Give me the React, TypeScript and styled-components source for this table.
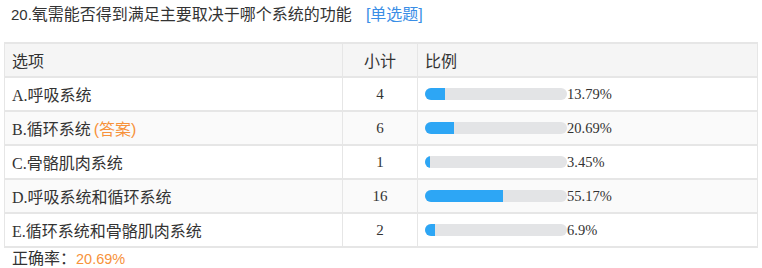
import React from "react";
import styled, { createGlobalStyle } from "styled-components";

const Global = createGlobalStyle`
  html, body { margin: 0; padding: 0; background: #fff; }
  body { font-family: "Liberation Sans", "Noto Sans CJK SC", sans-serif; color: #333; }
`;

const Page = styled.div`
  padding: 0 5px 0 4px;
  width: 762px;
  box-sizing: border-box;
`;

const Title = styled.div`
  font-size: 16px;
  line-height: 22px;
  padding: 4px 0 0 7px;
  height: 42px;
  box-sizing: border-box;
  color: #333;
`;

const Num = styled.span`
  font-size: 15px;
`;

const Tag = styled.span`
  color: #3a8ee6;
  margin-left: 14px;
`;

const Table = styled.table`
  width: 753px;
  border-collapse: collapse;
  table-layout: fixed;
  font-size: 16px;
`;

const HeadRow = styled.tr`
  background: #f5f5f5;
`;

const Row = styled.tr<{ $alt: boolean }>`
  background: ${(p) => (p.$alt ? "#fafafa" : "#fff")};
`;

const Cell = styled.td<{ $center?: boolean; $head?: boolean }>`
  border: 1px solid #e6e6e6;
  border-width: 2px 1px;
  height: 32px;
  padding: 0 7px;
  text-align: ${(p) => (p.$center ? "center" : "left")};
  font-family: ${(p) =>
    p.$head
      ? '"Liberation Sans", "Noto Sans CJK SC", sans-serif'
      : '"Liberation Serif", "Noto Sans CJK SC", serif'};
  font-weight: 400;
  color: #333;
  white-space: nowrap;
  vertical-align: middle;
`;

const Count = styled.span`
  font-size: 15px;
`;

const Answer = styled.span`
  color: #f7923b;
  font-family: "Liberation Sans", "Noto Sans CJK SC", sans-serif;
  margin-left: 3px;
`;

const BarWrap = styled.div`
  display: flex;
  align-items: center;
`;

const Track = styled.div`
  width: 142px;
  height: 12px;
  border-radius: 6px;
  background: #e3e4e6;
  overflow: hidden;
`;

const Fill = styled.div`
  height: 100%;
  background: #2da6f5;
`;

const Pct = styled.span`
  color: #333;
  font-size: 14.5px;
`;

const Footer = styled.div`
  font-size: 16px;
  line-height: 20px;
  padding: 1px 0 0 8px;
`;

const Rate = styled.span`
  color: #f7923b;
  font-size: 14.5px;
`;

const rows = [
  { label: "A.呼吸系统", n: 4, p: 13.79, pct: "13.79%" },
  { label: "B.循环系统", n: 6, p: 20.69, pct: "20.69%", answer: true },
  { label: "C.骨骼肌肉系统", n: 1, p: 3.45, pct: "3.45%" },
  { label: "D.呼吸系统和循环系统", n: 16, p: 55.17, pct: "55.17%" },
  { label: "E.循环系统和骨骼肌肉系统", n: 2, p: 6.9, pct: "6.9%" },
];

export default function App() {
  return (
    <Page>
      <Global />
      <Title>
        <Num>20.</Num>氧需能否得到满足主要取决于哪个系统的功能
        <Tag>[单选题]</Tag>
      </Title>
      <Table>
        <colgroup>
          <col style={{ width: 338 }} />
          <col style={{ width: 75 }} />
          <col style={{ width: 340 }} />
        </colgroup>
        <thead>
          <HeadRow>
            <Cell as="th" $head>选项</Cell>
            <Cell as="th" $head $center>小计</Cell>
            <Cell as="th" $head>比例</Cell>
          </HeadRow>
        </thead>
        <tbody>
          {rows.map((r, i) => (
            <Row key={r.label} $alt={i % 2 === 1}>
              <Cell>
                {r.label}
                {r.answer && <Answer>(答案)</Answer>}
              </Cell>
              <Cell $center>
                <Count>{r.n}</Count>
              </Cell>
              <Cell>
                <BarWrap>
                  <Track>
                    <Fill style={{ width: `${r.p}%` }} />
                  </Track>
                  <Pct>{r.pct}</Pct>
                </BarWrap>
              </Cell>
            </Row>
          ))}
        </tbody>
      </Table>
      <Footer>
        正确率：<Rate>20.69%</Rate>
      </Footer>
    </Page>
  );
}
